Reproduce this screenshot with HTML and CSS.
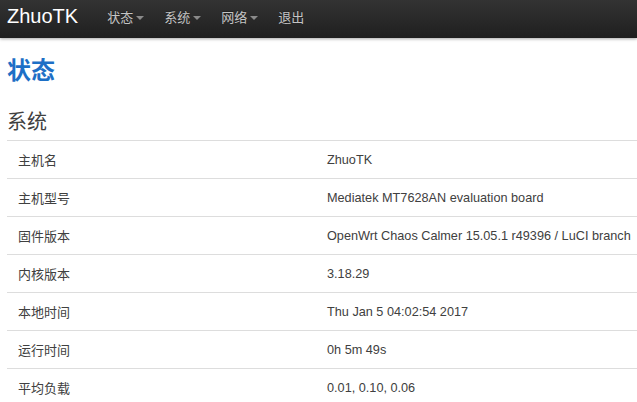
FILE: index.html
```html
<!DOCTYPE html>
<html lang="zh-CN">
<head>
    <meta charset="UTF-8">
    <meta name="viewport" content="width=device-width, initial-scale=1.0">
    <title>ZhuoTK - 状态</title>
    <link rel="stylesheet" href="styles.css">
</head>
<body>
    <div class="topbar">
        <a class="brand" href="#">ZhuoTK</a>
        <ul class="nav">
            <li><a href="#">状态<span class="caret"></span></a></li>
            <li><a href="#">系统<span class="caret"></span></a></li>
            <li><a href="#">网络<span class="caret"></span></a></li>
            <li><a href="#">退出</a></li>
        </ul>
    </div>

    <div class="container">
        <h2 class="page-title">状态</h2>

        <div class="section">
            <h3 class="section-title">系统</h3>
            <div class="status-table">
                <div class="row"><div class="label">主机名</div><div class="value">ZhuoTK</div></div>
                <div class="row"><div class="label">主机型号</div><div class="value">Mediatek MT7628AN evaluation board</div></div>
                <div class="row"><div class="label">固件版本</div><div class="value">OpenWrt Chaos Calmer 15.05.1 r49396 / LuCI branch</div></div>
                <div class="row"><div class="label">内核版本</div><div class="value">3.18.29</div></div>
                <div class="row"><div class="label">本地时间</div><div class="value">Thu Jan 5 04:02:54 2017</div></div>
                <div class="row"><div class="label">运行时间</div><div class="value">0h 5m 49s</div></div>
                <div class="row"><div class="label">平均负载</div><div class="value">0.01, 0.10, 0.06</div></div>
            </div>
        </div>
    </div>
</body>
</html>
```

FILE: styles.css
```css
html, body {
    margin: 0;
    padding: 0;
    overflow: hidden;
}

body {
    font-family: "Liberation Sans", Arial, "Noto Sans CJK SC", sans-serif;
    font-size: 13px;
    color: #404040;
    background: #fff;
}

.topbar {
    display: flex;
    align-items: center;
    height: 38px;
    padding: 0 0 5px 7px;
    box-sizing: border-box;
    background: linear-gradient(to bottom, #333333 0%, #1f1f1f 100%);
    box-shadow: 0 1px 3px rgba(0, 0, 0, 0.35);
}

.brand {
    font-size: 20px;
    color: #ffffff;
    text-decoration: none;
}

.nav {
    display: flex;
    list-style: none;
    margin: 0 0 0 19px;
    padding: 0;
}

.nav a {
    display: flex;
    align-items: center;
    padding: 0 10px;
    font-size: 13px;
    color: #c4c4c4;
    text-decoration: none;
    text-shadow: 0 -1px 0 rgba(0, 0, 0, 0.25);
}

.caret {
    display: inline-block;
    width: 0;
    height: 0;
    margin: 2px 0 0 3px;
    border-top: 4px solid #8a8a8a;
    border-left: 4px solid transparent;
    border-right: 4px solid transparent;
}

.container {
    padding: 0 0 0 7px;
}

.page-title {
    margin: 15px 0 0 0;
    font-size: 24px;
    line-height: 36px;
    font-weight: bold;
    color: #1d6fc6;
}

.section-title {
    margin: 18px 0 3px 0;
    font-size: 20px;
    line-height: 30px;
    font-weight: normal;
    color: #404040;
}

.status-table {
    overflow: hidden;
}

.row {
    display: flex;
    height: 38px;
    box-sizing: border-box;
    border-top: 1px solid #dddddd;
    align-items: center;
    white-space: nowrap;
}

.label {
    flex: 0 0 309px;
    padding-left: 11px;
    box-sizing: border-box;
}

.value {
    padding-left: 11px;
    font-size: 12.7px;
}
```
